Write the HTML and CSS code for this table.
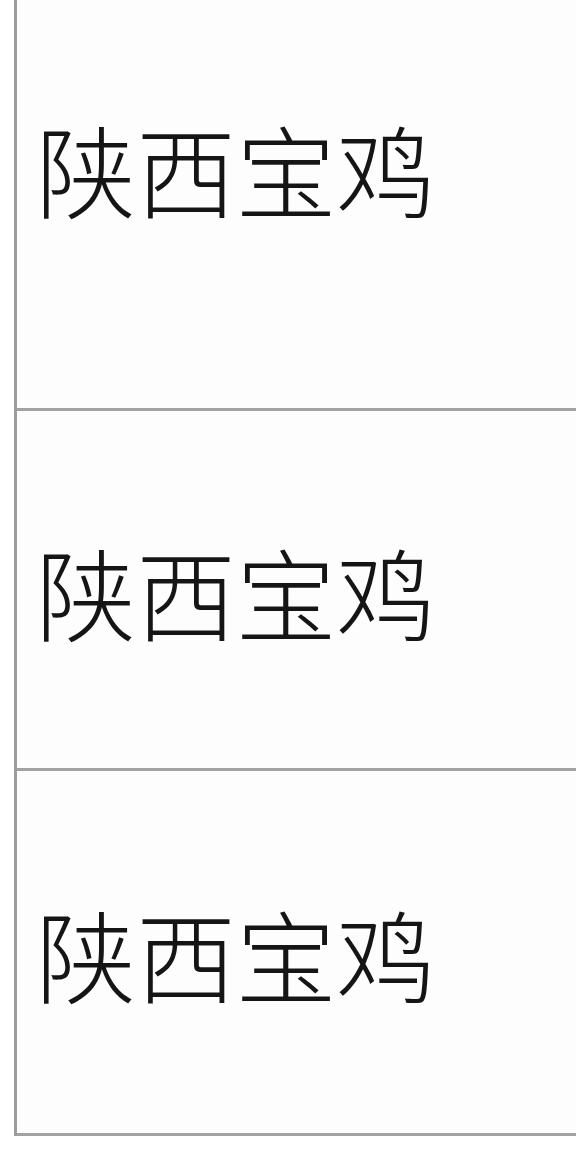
FILE: index.html
```html
<!DOCTYPE html>
<html lang="zh-CN">
<head>
<meta charset="utf-8">
<title>陕西宝鸡</title>
<link rel="stylesheet" href="styles.css">
</head>
<body>
<div class="table">
  <div class="row row-1"><span class="cell">陕西宝鸡</span></div>
  <div class="row row-2"><span class="cell">陕西宝鸡</span></div>
  <div class="row row-3"><span class="cell">陕西宝鸡</span></div>
</div>
</body>
</html>
```

FILE: styles.css
```css
html, body {
  margin: 0;
  padding: 0;
  background: #ffffff;
}

body {
  width: 576px;
  height: 1160px;
  overflow: hidden;
  font-family: "Noto Sans CJK SC", "Noto Sans", sans-serif;
}

.table {
  box-sizing: border-box;
  margin-left: 14px;
  width: 562px;
  border-left: 3px solid #9c9c9c;
  background: #fdfdfd;
  display: flex;
  flex-direction: column;
}

.row {
  box-sizing: border-box;
  border-bottom: 3px solid #a2a2a2;
  padding-left: 19px;
}

.row-1 {
  height: 411px;
  padding-top: 118px;
}

.row-2 {
  height: 360px;
  padding-top: 130px;
}

.row-3 {
  height: 365px;
  padding-top: 132px;
}

.cell {
  display: block;
  font-size: 100px;
  line-height: 100px;
  font-weight: 300;
  color: #151515;
  white-space: nowrap;
}
```
